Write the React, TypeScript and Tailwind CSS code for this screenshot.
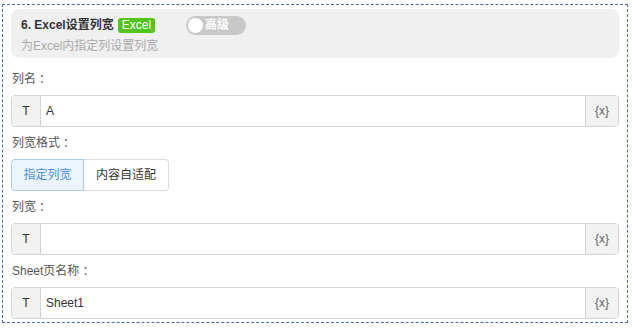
import React from 'react';

const font = { fontFamily: '"Liberation Sans", "Noto Sans CJK SC", sans-serif' };

interface VarInputProps {
  value?: string;
}

const VarInput: React.FC<VarInputProps> = ({ value }) => (
  <div className="flex h-8 rounded border border-[#d4d4d4] overflow-hidden bg-white">
    <div className="w-[29px] shrink-0 flex items-center justify-center bg-[#f2f2f2] border-r border-[#d4d4d4] text-[12px] text-[#333]">
      T
    </div>
    <div className="flex-1 flex items-center px-[5px] text-[12px] text-[#333]">{value}</div>
    <div className="w-[33px] shrink-0 flex items-center justify-center bg-[#f2f2f2] border-l border-[#d4d4d4] text-[12px] text-[#666]">
      {'{x}'}
    </div>
  </div>
);

const Field: React.FC<{ label: string; children: React.ReactNode }> = ({ label, children }) => (
  <div className="flex flex-col">
    <div className="h-5 leading-5 text-[12px] text-[#555] mb-[6px] pl-px">
      {label}
      <span className="ml-[3px]">：</span>
    </div>
    {children}
  </div>
);

export default function App() {
  return (
    <div className="w-[632px] h-[328px] bg-white pt-1 pl-[2px]" style={font}>
      <div className="w-[626px] h-[319px] border border-dashed border-[#4a6aa5] px-2 pt-1">
        <div className="h-[49px] rounded-lg bg-[#f0f0f0] pl-[10px] pt-[6px]">
          <div className="h-5 flex items-center">
            <span className="text-[12px] font-bold text-[#333]">6. Excel设置列宽</span>
            <span className="ml-[4px] h-[15px] leading-[15px] px-[4px] rounded-[3px] bg-[#52c41a] text-white text-[12px]">
              Excel
            </span>
            <div className="ml-[31px] w-[60px] h-[19px] rounded-full bg-[#c8c8c8] flex items-center pl-[2px]">
              <div className="w-[15px] h-[15px] rounded-full bg-white" />
              <span className="ml-[2px] text-[12px] font-bold text-white">高级</span>
            </div>
          </div>
          <div className="mt-[1px] h-5 leading-5 text-[12px] text-[#aaa]">为Excel内指定列设置列宽</div>
        </div>

        <div className="mt-[11px] flex flex-col gap-[6px]">
          <Field label="列名">
            <VarInput value="A" />
          </Field>
          <Field label="列宽格式">
            <div className="flex h-8 text-[12px]">
              <div className="w-[73px] flex items-center justify-center rounded-l border border-[#a9cbef] bg-[#ecf5ff] text-[#4a90e2]">
                指定列宽
              </div>
              <div className="w-[85px] flex items-center justify-center rounded-r border border-l-0 border-[#dcdcdc] bg-white text-[#333]">
                内容自适配
              </div>
            </div>
          </Field>
          <Field label="列宽">
            <VarInput />
          </Field>
          <Field label="Sheet页名称">
            <VarInput value="Sheet1" />
          </Field>
        </div>
      </div>
    </div>
  );
}
